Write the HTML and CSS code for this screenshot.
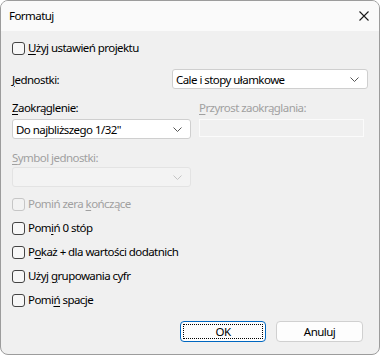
FILE: index.html
```html
<!DOCTYPE html>
<html lang="pl">
<head>
    <meta charset="UTF-8">
    <title>Formatuj</title>
    <link rel="stylesheet" href="styles.css">
</head>
<body>

    <div class="window">
        <div class="titlebar">
            <span class="title">Formatuj</span>
            <svg class="close" width="10" height="10" viewBox="0 0 10 10">
                <path d="M0.5 0.5 L9.5 9.5 M9.5 0.5 L0.5 9.5" stroke="#1a1a1a" stroke-width="1.1" fill="none"/>
            </svg>
        </div>

        <div class="content">
            <label class="check first">
                <span class="box"></span>
                <span><u>U</u>żyj ustawień projektu</span>
            </label>

            <div class="units-row">
                <span><u>J</u>ednostki:</span>
                <div class="dropdown wide">
                    <span>Cale i stopy ułamkowe</span>
                    <svg class="chevron" width="9" height="5" viewBox="0 0 9 5"><path d="M0.5 0.5 L4.5 4.5 L8.5 0.5" stroke="#555" fill="none"/></svg>
                </div>
            </div>

            <div class="two-cols">
                <div class="col-left">
                    <div class="field-label"><u>Z</u>aokrąglenie:</div>
                    <div class="dropdown">
                        <span>Do najbliższego 1/32"</span>
                        <svg class="chevron" width="9" height="5" viewBox="0 0 9 5"><path d="M0.5 0.5 L4.5 4.5 L8.5 0.5" stroke="#555" fill="none"/></svg>
                    </div>
                </div>
                <div class="col-right">
                    <div class="field-label disabled"><u>P</u>rzyrost zaokrąglania:</div>
                    <div class="textbox-disabled"></div>
                </div>
            </div>

            <div class="col-left symbol">
                <div class="field-label disabled tight"><u>S</u>ymbol jednostki:</div>
                <div class="dropdown disabled-box">
                    <span></span>
                    <svg class="chevron" width="9" height="5" viewBox="0 0 9 5"><path d="M0.5 0.5 L4.5 4.5 L8.5 0.5" stroke="#c4c4c4" fill="none"/></svg>
                </div>
            </div>

            <div class="check-list">
                <label class="check disabled">
                    <span class="box"></span>
                    <span>Pomiń zera <u>k</u>ończące</span>
                </label>
                <label class="check">
                    <span class="box"></span>
                    <span>Pom<u>i</u>ń 0 stóp</span>
                </label>
                <label class="check">
                    <span class="box"></span>
                    <span>P<u>o</u>każ + dla wartości dodatnich</span>
                </label>
                <label class="check">
                    <span class="box"></span>
                    <span>Użyj <u>g</u>rupowania cyfr</span>
                </label>
                <label class="check last">
                    <span class="box"></span>
                    <span>Pomi<u>ń</u> spacje</span>
                </label>
            </div>

            <div class="buttons">
                <button class="btn default"><span class="focus">OK</span></button>
                <button class="btn">Anuluj</button>
            </div>
        </div>
    </div>

</body>
</html>
```

FILE: styles.css
```css
* {
    box-sizing: border-box;
}
body {
    margin: 0;
    width: 380px;
    height: 355px;
    font-family: "Segoe UI", "Noto Sans", sans-serif;
    font-size: 11.5px;
    letter-spacing: -0.55px;
    color: #000;
    background: #fff;
}
.window {
    width: 380px;
    height: 355px;
    border: 1px solid #9c9c9c;
    border-radius: 8px;
    overflow: hidden;
    background: #f0f0f0;
    display: flex;
    flex-direction: column;
}
.titlebar {
    height: 30px;
    flex-shrink: 0;
    background: #fafafa;
    display: flex;
    align-items: center;
    justify-content: space-between;
    padding: 0 10px 0 8px;
}
.title {
    line-height: 16px;
}
.close {
    display: block;
}
.content {
    padding: 0 11px;
}
u {
    text-decoration: underline;
    text-underline-offset: 2px;
}
.check {
    display: flex;
    align-items: center;
    height: 16px;
    line-height: 16px;
    gap: 3px;
}
.check .box {
    width: 13px;
    height: 13px;
    border: 1px solid #444;
    border-radius: 3px;
    background: #f7f7f7;
    flex-shrink: 0;
}
.check.first {
    margin-top: 9px;
}
.check.disabled {
    color: #a0a0a0;
}
.check.disabled .box {
    border-color: #c6c6c6;
    background: #f2f2f2;
}
.units-row {
    display: flex;
    align-items: center;
    justify-content: space-between;
    margin-top: 13px;
}
.dropdown {
    width: 179px;
    height: 20px;
    background: #fff;
    border: 1px solid #cfcfcf;
    border-radius: 3px;
    display: flex;
    align-items: center;
    justify-content: space-between;
    padding: 0 8px 0 3px;
}
.dropdown.wide {
    width: 196px;
}
.dropdown.disabled-box {
    background: #f3f3f3;
    border-color: #e3e3e3;
}
.chevron {
    display: block;
}
.two-cols {
    display: flex;
    gap: 8px;
    margin-top: 11px;
}
.col-left {
    width: 179px;
}
.col-right {
    width: 165px;
}
.field-label {
    line-height: 16px;
    height: 16px;
    margin-bottom: 3px;
}
.field-label.disabled {
    color: #a0a0a0;
}
.field-label.tight {
    margin-bottom: 1px;
}
.textbox-disabled {
    height: 18px;
    margin-top: 1px;
    border: 1px solid #fbfbfb;
    background: #f0f0f0;
}
.symbol {
    margin-top: 11px;
}
.check-list {
    margin-top: 9px;
    display: flex;
    flex-direction: column;
    gap: 8px;
}
.buttons {
    display: flex;
    justify-content: flex-end;
    gap: 10px;
    margin-top: 13px;
    padding-right: 5px;
}
.btn {
    width: 86px;
    height: 21px;
    padding: 0;
    font-family: "Segoe UI", "Noto Sans", sans-serif;
    font-size: 11.5px;
    letter-spacing: -0.55px;
    color: #000;
    background: #fdfdfd;
    border: 1px solid #d0d0d0;
    border-radius: 4px;
}
.btn + .btn {
    width: 87px;
}
.btn.default {
    border-color: #0067c0;
    padding: 2px;
}
.focus {
    display: flex;
    align-items: center;
    justify-content: center;
    width: 100%;
    height: 100%;
    border: 1px dotted #000;
}
```
